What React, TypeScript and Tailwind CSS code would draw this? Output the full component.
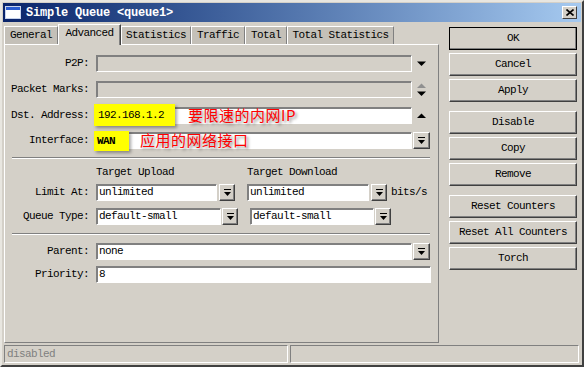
import type { ReactNode } from "react";

const mono = "font-['Liberation_Mono','DejaVu_Sans_Mono',monospace] text-[11px] tracking-[-0.6px] text-black";

const raised =
  "bg-[#d4d0c8] border border-t-white border-l-white border-r-[#404040] border-b-[#404040] shadow-[inset_-1px_-1px_0_#808080]";

const sunken =
  "border border-t-[#808080] border-l-[#808080] border-r-white border-b-white shadow-[inset_1px_1px_0_#808080]";

const DownBar = () => (
  <svg width="9" height="8" viewBox="0 0 9 8">
    <rect x="1" y="0" width="7" height="1" fill="#000" />
    <polygon points="1,3 8,3 4.5,7" fill="#000" />
  </svg>
);

const Tri = ({ up, color = "#000" }: { up?: boolean; color?: string }) => (
  <svg width="10" height="6" viewBox="0 0 10 6">
    {up ? (
      <polygon points="0,5 9,5 4.5,0.5" fill={color} />
    ) : (
      <polygon points="0,0.5 9,0.5 4.5,5" fill={color} />
    )}
  </svg>
);

const Input = ({
  w,
  disabled,
  children,
}: {
  w: string;
  disabled?: boolean;
  children?: ReactNode;
}) => (
  <div
    className={`${w} h-[17px] ${sunken} ${
      disabled ? "bg-[#d4d0c8]" : "bg-white"
    } px-[2px] leading-[15px] whitespace-nowrap overflow-hidden`}
  >
    {children}
  </div>
);

const DropBtn = ({ className = "" }: { className?: string }) => (
  <div className={`w-[16px] h-[17px] ${raised} flex items-center justify-center ${className}`}>
    <DownBar />
  </div>
);

const Row = ({
  label,
  mt,
  children,
}: {
  label: string;
  mt: string;
  children: ReactNode;
}) => (
  <div className={`flex items-center h-[17px] ${mt}`}>
    <div className="w-[84px] text-right">{label}</div>
    <div className="ml-[7px] flex items-center relative">{children}</div>
  </div>
);

const Sep = ({ mt }: { mt: string }) => (
  <div className={`${mt} ml-[7px] w-[418px] h-[2px] border-t border-t-[#808080] border-b border-b-white`} />
);

const Btn = ({ label, def, mt = "mt-[3px]" }: { label: string; def?: boolean; mt?: string }) => (
  <div
    className={`${mt} h-[23px] w-[128px] flex items-center justify-center ${
      def ? "outline outline-1 outline-black -outline-offset-1 " : ""
    }${raised}`}
  >
    {label}
  </div>
);

const tabs = ["General", "Advanced", "Statistics", "Traffic", "Total", "Total Statistics"];
const tabW = ["w-[54px]", "w-[63px]", "w-[70px]", "w-[54px]", "w-[42px]", "w-[107px]"];

export default function App() {
  const red =
    "absolute whitespace-nowrap text-[15px] leading-[18px] text-[#ff0000] font-['Noto_Sans_CJK_SC',sans-serif] tracking-[0.5px] [text-shadow:2px_2px_3px_rgba(0,0,0,0.45)]";
  return (
    <div className={`w-[584px] h-[367px] bg-[#d4d0c8] border-2 border-t-[#e8e6e0] border-l-[#e8e6e0] border-r-[#404040] border-b-[#404040] p-[1px] flex flex-col ${mono}`}>
      {/* title bar */}
      <div className="h-[19px] flex items-center bg-linear-to-r from-[#0a246a] to-[#a6caf0]">
        <div className="ml-[2px] w-[16px] h-[13px] flex flex-col border border-[#c8d4ec]">
          <div className="h-[3px] bg-[#2a5cd0]" />
          <div className="flex-1 bg-white" />
        </div>
        <div className="ml-[5px] text-white font-bold text-[12px] tracking-[-0.2px]">Simple Queue &lt;queue1&gt;</div>
        <div className="ml-auto mr-[4px] w-[15px] h-[13px] bg-[#d4d0c8] border border-t-white border-l-white border-r-[#404040] border-b-[#404040] flex items-center justify-center">
          <svg width="8" height="7" viewBox="0 0 8 7">
            <path d="M0.5 0.5 L7.5 6.5 M7.5 0.5 L0.5 6.5" stroke="#000" strokeWidth="1.6" />
          </svg>
        </div>
      </div>

      <div className="flex mt-[2px] ml-[1px]">
        {/* left */}
        <div className="w-[435px] flex flex-col">
          <div className="h-[20px] flex items-end">
            {tabs.map((t, i) =>
              i === 1 ? (
                <div
                  key={t}
                  className={`${tabW[i]} h-[21px] -mb-[1px] relative z-10 bg-[#d4d0c8] border-t border-l border-t-white border-l-white border-r border-r-[#404040] shadow-[inset_-1px_0_0_#808080] flex items-center justify-center pb-[3px]`}
                >
                  {t}
                </div>
              ) : (
                <div
                  key={t}
                  className={`${tabW[i]} h-[18px] bg-[#c4c0b8] border-t border-l border-t-white border-l-white border-r border-r-[#808080] flex items-center justify-center`}
                >
                  {t}
                </div>
              )
            )}
          </div>
          <div className="h-[299px] border border-t-white border-l-white border-r-[#808080] border-b-[#808080] flex flex-col">
            <Row label="P2P:" mt="mt-[10px]">
              <Input w="w-[316px]" disabled />
              <div className="w-[17px] ml-[1px] flex justify-center">
                <Tri />
              </div>
            </Row>
            <Row label="Packet Marks:" mt="mt-[9px]">
              <Input w="w-[316px]" disabled />
              <div className="w-[17px] ml-[1px] flex flex-col items-center gap-[2px]">
                <Tri up color="#909090" />
                <Tri />
              </div>
            </Row>
            <Row label="Dst. Address:" mt="mt-[9px]">
              <Input w="w-[316px]" />
              <div className="w-[17px] ml-[1px] flex justify-center">
                <Tri up />
              </div>
              <div className="absolute left-[-2px] top-[-3px] w-[81px] h-[22px] bg-[#ffff00] shadow-[2px_2px_3px_rgba(0,0,0,0.35)] flex items-center pl-[4px] text-[11px]">
                192.168.1.2
              </div>
              <div className={`${red} left-[92px] top-[-1px]`}>要限速的内网IP</div>
            </Row>
            <Row label="Interface:" mt="mt-[8px]">
              <Input w="w-[316px]" />
              <DropBtn className="ml-[1px] w-[17px]" />
              <div className="absolute left-[-2px] top-[-1px] w-[35px] h-[20px] bg-[#ffff00] shadow-[2px_2px_3px_rgba(0,0,0,0.35)] flex items-center pl-[3px] font-bold">
                WAN
              </div>
              <div className={`${red} left-[44px] top-[-1px]`}>应用的网络接口</div>
            </Row>
            <Sep mt="mt-[8px]" />
            <div className="mt-[6px] h-[14px] flex items-center">
              <div className="ml-[91px] w-[151px]">Target Upload</div>
              <div>Target Download</div>
            </div>
            <Row label="Limit At:" mt="mt-[5px]">
              <Input w="w-[121px]">unlimited</Input>
              <DropBtn className="ml-[2px]" />
              <div className="ml-[12px]">
                <Input w="w-[122px]">unlimited</Input>
              </div>
              <DropBtn className="ml-[2px]" />
              <div className="ml-[4px]">bits/s</div>
            </Row>
            <Row label="Queue Type:" mt="mt-[7px]">
              <Input w="w-[125px]">default-small</Input>
              <DropBtn className="ml-[1px]" />
              <div className="ml-[12px]">
                <Input w="w-[124px]">default-small</Input>
              </div>
              <DropBtn className="ml-[1px]" />
            </Row>
            <Sep mt="mt-[8px]" />
            <Row label="Parent:" mt="mt-[8px]">
              <Input w="w-[316px]">none</Input>
              <DropBtn className="ml-[1px] w-[17px]" />
            </Row>
            <Row label="Priority:" mt="mt-[6px]">
              <Input w="w-[335px]">8</Input>
            </Row>
          </div>
        </div>

        {/* right buttons */}
        <div className="ml-[10px] flex flex-col">
          <Btn label="OK" def mt="mt-[3px]" />
          <Btn label="Cancel" />
          <Btn label="Apply" />
          <Btn label="Disable" mt="mt-[9px]" />
          <Btn label="Copy" />
          <Btn label="Remove" />
          <Btn label="Reset Counters" mt="mt-[9px]" />
          <Btn label="Reset All Counters" />
          <Btn label="Torch" />
        </div>
      </div>

      {/* status bar */}
      <div className="mt-[2px] ml-[1px] h-[18px] flex gap-[2px]">
        <div className={`w-[284px] h-full border border-t-[#808080] border-l-[#808080] border-r-white border-b-white px-[2px] leading-[16px] text-[#808080]`}>
          disabled
        </div>
        <div className="w-[289px] h-full border border-t-[#808080] border-l-[#808080] border-r-white border-b-white" />
      </div>
    </div>
  );
}
